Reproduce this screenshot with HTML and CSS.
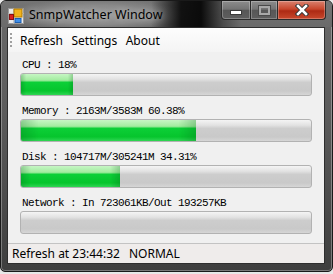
FILE: index.html
```html
<!DOCTYPE html>
<html lang="en">
<head>
    <meta charset="UTF-8">
    <title>SnmpWatcher Window</title>
    <link rel="stylesheet" href="styles.css">
</head>
<body>

    <div class="window">
        <div class="titlebar">
            <svg class="app-icon" width="16" height="16" viewBox="0 0 16 16">
                <rect x="0.5" y="0.5" width="15" height="15" fill="#e9e9e9" stroke="#9a9a9a"/>
                <line x1="0.5" y1="5.5" x2="15.5" y2="5.5" stroke="#c4c4c4"/>
                <line x1="5.5" y1="0.5" x2="5.5" y2="15.5" stroke="#c4c4c4"/>
                <rect x="6" y="1" width="8" height="8" fill="#f2b21a" stroke="#b07a00"/>
                <rect x="1.5" y="6.5" width="4" height="5" fill="#d92020" stroke="#8a1010"/>
                <rect x="7" y="10.5" width="6" height="4" fill="#3f8ee8" stroke="#1d5fb0"/>
            </svg>
            <span class="title">SnmpWatcher Window</span>
            <div class="caption-buttons">
                <div class="cbtn min"><span class="min-bar"></span></div>
                <div class="cbtn max"><span class="max-box"></span></div>
                <div class="cbtn close">
                    <svg width="14" height="12" viewBox="0 0 14 12">
                        <path d="M3 2 L11 10 M11 2 L3 10" stroke="#3a3a3a" stroke-width="4.5" stroke-linecap="square"/>
                        <path d="M3 2 L11 10 M11 2 L3 10" stroke="#ffffff" stroke-width="2.5" stroke-linecap="square"/>
                    </svg>
                </div>
            </div>
        </div>

        <div class="client">
            <div class="menu">
                <span class="grip"></span>
                <span class="menu-item">Refresh</span>
                <span class="menu-item">Settings</span>
                <span class="menu-item">About</span>
            </div>

            <div class="content">
                <div class="row">
                    <div class="label">CPU : 18%</div>
                    <div class="bar"><div class="fill" style="width: 18%"></div></div>
                </div>
                <div class="row">
                    <div class="label">Memory : 2163M/3583M 60.38%</div>
                    <div class="bar"><div class="fill" style="width: 60.38%"></div></div>
                </div>
                <div class="row">
                    <div class="label">Disk : 104717M/305241M 34.31%</div>
                    <div class="bar"><div class="fill" style="width: 34.31%"></div></div>
                </div>
                <div class="row">
                    <div class="label">Network : In 723061KB/Out 193257KB</div>
                    <div class="bar"></div>
                </div>
            </div>

            <div class="status">
                <span>Refresh at 23:44:32</span>
                <span class="state">NORMAL</span>
            </div>
        </div>
    </div>

</body>
</html>
```

FILE: styles.css
```css
body {
    margin: 0;
    background-color: #e8e8e8;
}

.window {
    width: 331px;
    height: 270px;
    border: 1px solid #1a1a1a;
    border-radius: 6px 6px 5px 5px;
    box-shadow: inset 0 0 0 1px rgba(255, 255, 255, 0.3);
    background: linear-gradient(to bottom, #6a6a6a 0%, #5c5c5c 40%, #3e3e3e 100%);
    display: flex;
    flex-direction: column;
    overflow: hidden;
}

.titlebar {
    height: 27px;
    display: flex;
    align-items: flex-start;
    background:
        linear-gradient(to right,
            rgba(0, 0, 0, 0) 0px,
            rgba(0, 0, 0, 0) 150px,
            rgba(0, 0, 0, 0.85) 180px,
            rgba(0, 0, 0, 0.9) 200px,
            rgba(0, 0, 0, 0.3) 222px,
            rgba(0, 0, 0, 0) 240px),
        radial-gradient(ellipse 90px 16px at 95px 14px, #9a9a9a 0%, #8a8a8a 60%, rgba(120, 120, 120, 0) 100%),
        linear-gradient(to bottom, #747474, #6a6a6a);
}

.app-icon {
    margin: 7px 0 0 7px;
    flex: none;
}

.title {
    font-family: "Noto Sans", sans-serif;
    font-size: 12.5px;
    line-height: 16px;
    margin: 6px 0 0 5px;
    color: #000;
    text-shadow: 0 0 6px rgba(255, 255, 255, 0.5);
}

.caption-buttons {
    margin-left: auto;
    margin-right: 6px;
    display: flex;
}

.cbtn {
    height: 18px;
    border: 1px solid #2b2b2b;
    border-top: none;
    box-shadow: inset 0 0 0 1px rgba(255, 255, 255, 0.25);
    display: flex;
    align-items: center;
    justify-content: center;
    background: linear-gradient(to bottom, #8c8c8c 0%, #747474 45%, #575757 52%, #5e5e5e 100%);
}

.min {
    width: 28px;
    border-radius: 0 0 0 4px;
}

.max {
    width: 26px;
    border-left: none;
}

.close {
    width: 47px;
    border-left: none;
    border-radius: 0 0 4px 0;
    background: linear-gradient(to bottom, #d9826f 0%, #c8462c 45%, #ad2a14 55%, #c8482c 100%);
}

.min-bar {
    width: 10px;
    height: 3px;
    margin-top: 5px;
    background-color: #fff;
    border: 1px solid #3a3a3a;
}

.max-box {
    width: 7px;
    height: 5px;
    border: 2px solid #a8a8a8;
    outline: 1px solid #4a4a4a;
}

.client {
    margin: 0 7px 7px 6px;
    flex: 1;
    border: 1px solid #2e2e2e;
    background-color: #f0f0f0;
    display: flex;
    flex-direction: column;
}

.menu {
    height: 24px;
    display: flex;
    align-items: center;
    background: linear-gradient(to bottom, #fdfdfd, #f4f4f4);
    font-family: "Noto Sans", sans-serif;
    font-size: 12px;
    color: #000;
}

.grip {
    width: 2px;
    height: 14px;
    margin: 0 4px 0 2px;
    background: repeating-linear-gradient(to bottom, #a0a0a0 0 2px, transparent 2px 4px);
}

.menu-item {
    padding: 0 4px 0 4px;
    margin-right: 0.5px;
}

.content {
    flex: 1;
    padding: 7px 0 0 12px;
}

.row {
    margin-bottom: 9px;
}

.label {
    font-family: "Liberation Mono", monospace;
    font-size: 11px;
    letter-spacing: -0.6px;
    line-height: 13px;
    margin-left: 2px;
    color: #000;
}

.bar {
    margin-top: 1px;
    width: 290px;
    height: 21px;
    border: 1px solid #b2b2b2;
    border-radius: 3px;
    overflow: hidden;
    background: linear-gradient(to bottom, #f4f4f4 0%, #e2e2e2 25%, #cdcdcd 40%, #c9c9c9 80%, #d6d6d6 100%);
}

.fill {
    height: 100%;
    background:
        linear-gradient(to right, rgba(0, 90, 20, 0.25) 0%, rgba(0, 0, 0, 0) 10%, rgba(0, 0, 0, 0) 90%, rgba(0, 90, 20, 0.25) 100%),
        linear-gradient(to bottom, #c6f6c4 0%, #a2ec9f 30%, #0ccf37 40%, #06c52d 80%, #2fd653 100%);
}

.status {
    height: 19px;
    border-top: 1px solid #c3c3c3;
    background-color: #efeceb;
    display: flex;
    align-items: center;
    padding-left: 4px;
    font-family: "Noto Sans", sans-serif;
    font-size: 12px;
    color: #000;
}

.state {
    margin-left: 9px;
}
```
